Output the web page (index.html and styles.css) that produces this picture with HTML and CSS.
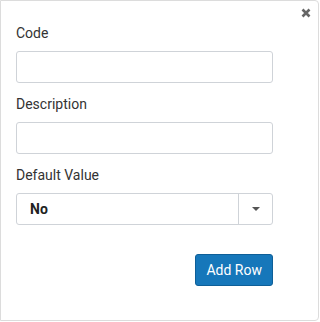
FILE: index.html
```html
<!DOCTYPE html>
<html lang="en">
<head>
  <meta charset="UTF-8" />
  <title>Add Row</title>
  <link rel="stylesheet" href="styles.css">
</head>
<body>
  <div class="panel">
    <svg class="close" width="10" height="10" viewBox="0 0 10 10">
      <path d="M1.5 1.5 L8.5 8.5 M8.5 1.5 L1.5 8.5" stroke="#666" stroke-width="2.6" stroke-linecap="butt" />
    </svg>
    <div class="field">
      <label>Code</label>
      <div class="input"></div>
    </div>
    <div class="field">
      <label>Description</label>
      <div class="input"></div>
    </div>
    <div class="field">
      <label>Default Value</label>
      <div class="select">
        <div class="select-value">No</div>
        <div class="select-arrow"><span class="caret"></span></div>
      </div>
    </div>
    <div class="actions">
      <button class="btn">Add Row</button>
    </div>
  </div>
</body>
</html>
```

FILE: styles.css
```css
body {
  margin: 0;
  font-family: Roboto, "Noto Sans", Arial, sans-serif;
  background-color: #fff;
  color: #333;
}
.panel {
  position: relative;
  width: 319px;
  height: 321px;
  box-sizing: border-box;
  border: 1px solid #dcdcdc;
  border-radius: 0 4px 4px 0;
  padding: 22px 45px 0 15px;
}
.close {
  position: absolute;
  top: 7px;
  right: 7px;
}
.field {
  margin-bottom: 11px;
}
.field label {
  display: block;
  font-size: 14px;
  line-height: 20px;
  margin-bottom: 8px;
}
.input {
  height: 32px;
  box-sizing: border-box;
  border: 1px solid #cfd3d8;
  border-radius: 3px;
}
.select {
  display: flex;
  height: 32px;
  box-sizing: border-box;
  border: 1px solid #cfd3d8;
  border-radius: 3px;
}
.select-value {
  flex: 1;
  padding-left: 13px;
  font-size: 14px;
  font-weight: bold;
  line-height: 30px;
  color: #222;
}
.select-arrow {
  width: 33px;
  border-left: 1px solid #cfd3d8;
  display: flex;
  align-items: center;
  justify-content: center;
}
.caret {
  width: 0;
  height: 0;
  border-left: 4px solid transparent;
  border-right: 4px solid transparent;
  border-top: 4px solid #555;
}
.actions {
  display: flex;
  justify-content: flex-end;
  margin-top: 29px;
}
.btn {
  height: 32px;
  padding: 0 10px;
  font-family: Roboto, Arial, sans-serif;
  font-size: 14px;
  color: #fff;
  background-color: #1677ba;
  border: 1px solid #0e5f98;
  border-radius: 3px;
}
```
